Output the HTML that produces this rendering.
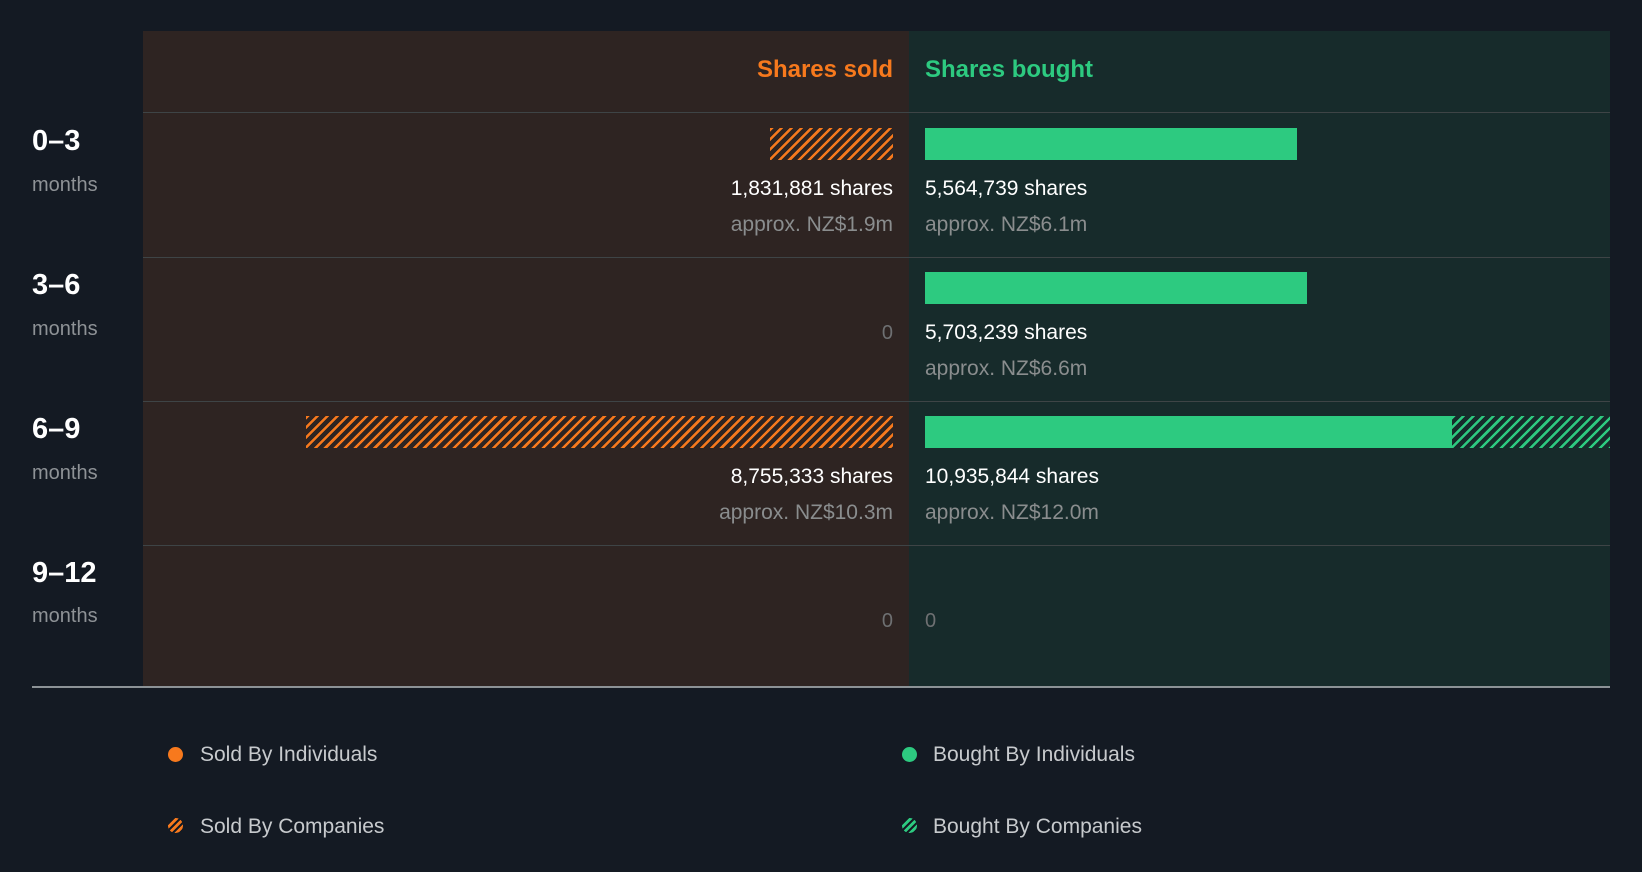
<!DOCTYPE html><html><head><style>
body{margin:0;width:1642px;height:872px;background:#141a23;font-family:"Liberation Sans",Roboto,sans-serif;position:relative;overflow:hidden}
div{position:absolute}
.t{white-space:nowrap;line-height:1}
.sold{left:143px;width:766px;top:31px;height:656px;background:#2e2422}
.bought{left:909px;width:701px;top:31px;height:656px;background:#172b2b}
.hl{left:143px;width:1467px;height:1px;background:#3e4446}
.hs{background:repeating-linear-gradient(135deg,#f7791d 0 2.5px,transparent 2.5px 7px)}
.hb{background:repeating-linear-gradient(135deg,#2dca80 0 2.5px,transparent 2.5px 7px)}
.g{background:#2dca80}
.r{text-align:right;right:749px}
.l{left:925px}
.w{color:#fff;font-size:21px}
.a{color:#8a8d8e;font-size:21px}
.z{color:#6e7072;font-size:20px}
.lab{left:32px;color:#fff;font-weight:bold;font-size:29px}
.mo{left:32px;color:#8e9296;font-size:20px}
.lg{color:#c7cacd;font-size:21px}
.dot{width:15px;height:15px;border-radius:50%;overflow:hidden}
</style></head><body>
<div class="sold"></div><div class="bought"></div>
<div class="t r" style="top:58px;color:#f7791d;font-weight:bold;font-size:24px">Shares sold</div>
<div class="t l" style="top:58px;color:#2dca80;font-weight:bold;font-size:24px">Shares bought</div>
<div class="hl" style="top:112px"></div><div class="hl" style="top:257px"></div><div class="hl" style="top:401px"></div><div class="hl" style="top:545px"></div>
<div style="left:32px;width:1578px;top:686px;height:2px;background:#8c9296"></div>

<div class="t lab" style="top:127px">0–3</div><div class="t mo" style="top:175px">months</div>
<div class="t lab" style="top:271px">3–6</div><div class="t mo" style="top:319px">months</div>
<div class="t lab" style="top:415px">6–9</div><div class="t mo" style="top:463px">months</div>
<div class="t lab" style="top:559px">9–12</div><div class="t mo" style="top:606px">months</div>

<div class="hs" style="left:770px;width:123px;top:128px;height:32px"></div>
<div class="g" style="left:925px;width:372px;top:128px;height:32px"></div>
<div class="t r w" style="top:178px">1,831,881 shares</div>
<div class="t r a" style="top:214px">approx. NZ$1.9m</div>
<div class="t l w" style="top:178px">5,564,739 shares</div>
<div class="t l a" style="top:214px">approx. NZ$6.1m</div>

<div class="g" style="left:925px;width:382px;top:272px;height:32px"></div>
<div class="t r z" style="top:323px">0</div>
<div class="t l w" style="top:322px">5,703,239 shares</div>
<div class="t l a" style="top:358px">approx. NZ$6.6m</div>

<div class="hs" style="left:306px;width:587px;top:416px;height:32px"></div>
<div class="g" style="left:925px;width:527px;top:416px;height:32px"></div>
<div class="hb" style="left:1452px;width:158px;top:416px;height:32px"></div>
<div class="t r w" style="top:466px">8,755,333 shares</div>
<div class="t r a" style="top:502px">approx. NZ$10.3m</div>
<div class="t l w" style="top:466px">10,935,844 shares</div>
<div class="t l a" style="top:502px">approx. NZ$12.0m</div>

<div class="t r z" style="top:611px">0</div>
<div class="t l z" style="top:611px">0</div>

<div class="dot" style="left:168px;top:747px;background:#f7791d"></div>
<div class="t lg" style="left:200px;top:744px">Sold By Individuals</div>
<div class="dot" style="left:168px;top:818px;background:repeating-linear-gradient(135deg,#f7791d 0 3px,#141a23 3px 5px)"></div>
<div class="t lg" style="left:200px;top:816px">Sold By Companies</div>
<div class="dot" style="left:902px;top:747px;background:#2dca80"></div>
<div class="t lg" style="left:933px;top:744px">Bought By Individuals</div>
<div class="dot" style="left:902px;top:818px;background:repeating-linear-gradient(135deg,#2dca80 0 3px,#141a23 3px 5px)"></div>
<div class="t lg" style="left:933px;top:816px">Bought By Companies</div>
</body></html>
